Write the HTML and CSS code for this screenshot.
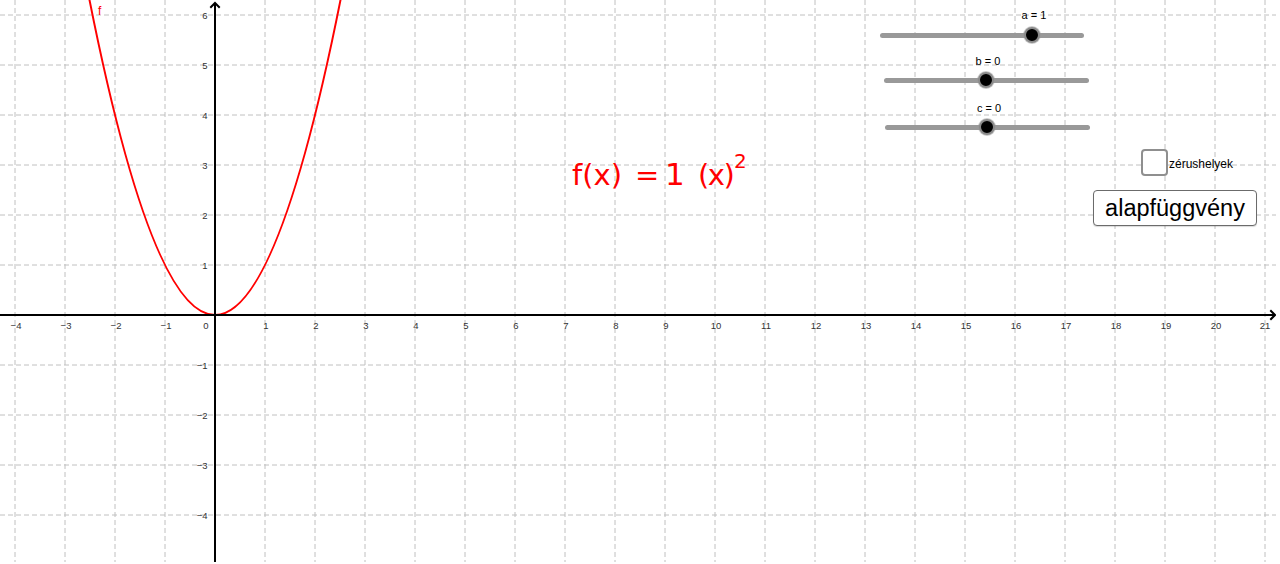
FILE: index.html
```html
<!DOCTYPE html>
<html>
<head>
<meta charset="utf-8">
<link rel="stylesheet" href="styles.css">
</head>
<body>
<div class="app">
  <svg class="graph" width="1276" height="562" viewBox="0 0 1276 562" xmlns="http://www.w3.org/2000/svg">
    <path class="grid" d="M15 0V562M65 0V562M115 0V562M165 0V562M265 0V562M315 0V562M365 0V562M415 0V562M465 0V562M515 0V562M565 0V562M615 0V562M665 0V562M715 0V562M765 0V562M815 0V562M865 0V562M915 0V562M965 0V562M1015 0V562M1065 0V562M1115 0V562M1165 0V562M1215 0V562M1265 0V562"/>
    <path class="grid" d="M0 15H1276M0 65H1276M0 115H1276M0 165H1276M0 215H1276M0 265H1276M0 365H1276M0 415H1276M0 465H1276M0 515H1276"/>
    <path class="curve" d="M65 -135Q215 765 365 -135"/>
    <path class="axis" d="M0 315H1275M215 562V3"/>
    <path class="axis arrow" d="M211 7L215 3L219 7M1271 311L1275 315L1271 319"/>
    <g class="xlabels">
      <text x="16">−4</text><text x="66">−3</text><text x="116">−2</text><text x="166">−1</text>
      <text x="206">0</text>
      <text x="266">1</text><text x="316">2</text><text x="366">3</text><text x="416">4</text><text x="466">5</text>
      <text x="516">6</text><text x="566">7</text><text x="616">8</text><text x="666">9</text><text x="716">10</text>
      <text x="766">11</text><text x="816">12</text><text x="866">13</text><text x="916">14</text><text x="966">15</text>
      <text x="1016">16</text><text x="1066">17</text><text x="1116">18</text><text x="1166">19</text><text x="1216">20</text>
      <text x="1265">21</text>
    </g>
    <g class="ylabels">
      <text y="18.5">6</text><text y="68.5">5</text><text y="118.5">4</text><text y="168.5">3</text><text y="218.5">2</text><text y="268.5">1</text>
      <text y="368.5">−1</text><text y="418.5">−2</text><text y="468.5">−3</text><text y="518.5">−4</text>
    </g>
    <text class="flabel" x="98" y="15">f</text>
    <text class="formula" y="185"><tspan class="loose" x="572">f(x)</tspan><tspan x="635">=</tspan><tspan class="one" x="665">1</tspan><tspan x="698">(x)</tspan><tspan class="sup" x="734" y="168">2</tspan></text>
  </svg>

  <div class="slider slider-a">
    <span class="slider-label label-a">a = 1</span>
    <div class="track"></div>
    <div class="knob knob-a"></div>
  </div>
  <div class="slider slider-b">
    <span class="slider-label label-b">b = 0</span>
    <div class="track"></div>
    <div class="knob knob-b"></div>
  </div>
  <div class="slider slider-c">
    <span class="slider-label label-c">c = 0</span>
    <div class="track"></div>
    <div class="knob knob-c"></div>
  </div>

  <label class="check">
    <span class="box"></span>
    <span class="check-text">zérushelyek</span>
  </label>

  <button class="btn">alapfüggvény</button>
</div>
</body>
</html>
```

FILE: styles.css
```css
html, body {
  margin: 0;
  padding: 0;
  background: #ffffff;
}
body {
  width: 1280px;
  height: 564px;
  overflow: hidden;
  font-family: "Liberation Sans", Arial, sans-serif;
}
.app {
  position: relative;
  width: 1280px;
  height: 564px;
}
.graph {
  display: block;
}
.grid {
  fill: none;
  stroke: #c0c0c0;
  stroke-width: 1;
  stroke-dasharray: 5 3;
}
.curve {
  fill: none;
  stroke: #ff0000;
  stroke-width: 2;
}
.axis {
  fill: none;
  stroke: #000000;
  stroke-width: 2;
}
.arrow {
  stroke-linecap: square;
}
.xlabels text {
  font-family: "Liberation Sans", Arial, sans-serif;
  font-size: 9.5px;
  fill: #333333;
  text-anchor: middle;
  transform: translateY(329px);
}
.ylabels text {
  font-family: "Liberation Sans", Arial, sans-serif;
  font-size: 9.5px;
  fill: #333333;
  text-anchor: end;
  transform: translateX(207.5px);
}
.flabel {
  font-family: "Liberation Sans", Arial, sans-serif;
  font-size: 12px;
  fill: #ff0000;
}
.formula {
  font-family: "DejaVu Sans", sans-serif;
  font-size: 29px;
  letter-spacing: -1.5px;
  fill: #ff0000;
}
.formula .loose {
  letter-spacing: 0;
}
.formula .one {
  font-size: 31px;
}
.formula .sup {
  font-size: 20px;
  letter-spacing: 0;
}

/* sliders */
.slider {
  position: absolute;
  height: 10px;
}
.slider-a { left: 880px; top: 30px; width: 204px; }
.slider-b { left: 884px; top: 75px; width: 205px; }
.slider-c { left: 885px; top: 122px; width: 205px; }
.track {
  position: absolute;
  left: 0;
  right: 0;
  top: 2.5px;
  height: 5px;
  border-radius: 3px;
  background: #999999;
}
.knob {
  position: absolute;
  top: -3px;
  width: 12px;
  height: 12px;
  border-radius: 50%;
  background: #000000;
  border: 2.5px solid #8a8a8a;
  box-shadow: 0 0 0 1px rgba(150,150,150,0.5);
  margin-left: -8.5px;
}
.knob-a { left: 152px; }
.knob-b { left: 102px; }
.knob-c { left: 102px; }
.slider-label {
  position: absolute;
  font-size: 11px;
  color: #000000;
  white-space: nowrap;
  transform: translateX(-50%);
  line-height: 12px;
}
.label-a { left: 154px; top: -21px; }
.label-b { left: 104px; top: -20px; }
.label-c { left: 104px; top: -20px; }

/* checkbox */
.check {
  position: absolute;
  left: 1141px;
  top: 149px;
  display: flex;
  align-items: center;
  gap: 1px;
}
.box {
  display: block;
  width: 23px;
  height: 23px;
  border: 2px solid #8f8f8f;
  border-radius: 4px;
  background: #ffffff;
}
.check-text {
  font-size: 12px;
  color: #000000;
  margin-top: 3px;
}

/* button */
.btn {
  position: absolute;
  left: 1093px;
  top: 190px;
  width: 164px;
  height: 36px;
  padding: 0;
  margin: 0;
  border: 1.5px solid #6b6b6b;
  border-radius: 4px;
  background: #ffffff;
  font-family: "Liberation Sans", Arial, sans-serif;
  font-size: 23.5px;
  color: #000000;
  line-height: 32px;
  box-shadow: 0 1px 1px rgba(0,0,0,0.15);
}
```
